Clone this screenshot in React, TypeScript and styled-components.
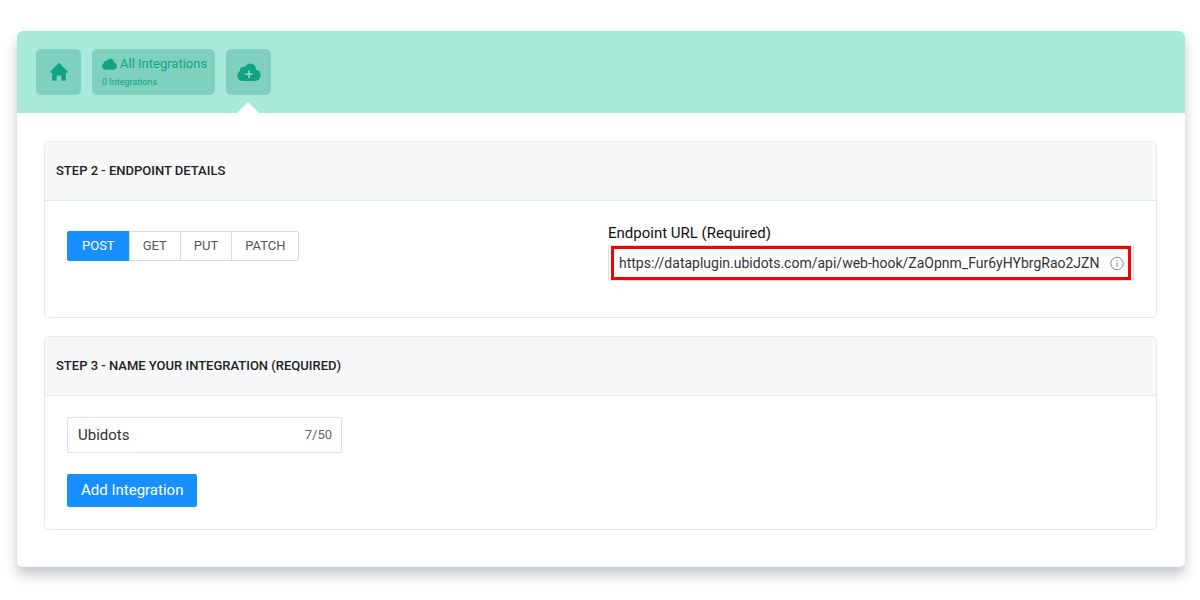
import React, { useState } from "react";
import styled, { createGlobalStyle } from "styled-components";

const GlobalStyle = createGlobalStyle`
  *, *::before, *::after { box-sizing: border-box; }
  body {
    margin: 0;
    background: #fff;
    color: #222;
    font-family: Roboto, "Liberation Sans", sans-serif;
    font-size: 15px;
    line-height: 20px;
  }
  button, input { font: inherit; color: inherit; }
`;

const Card = styled.main`
  margin: 31px 15px 33px 17px;
  border-radius: 6px;
  background: #fff;
  box-shadow: 0 8px 12px rgba(30, 40, 50, 0.25);
`;

const Toolbar = styled.nav`
  display: flex;
  gap: 11px;
  padding: 18px 19px;
  border-radius: 6px 6px 0 0;
  background: #a9e9d9;
`;

const Tile = styled.button<{ $active?: boolean }>`
  position: relative;
  display: flex;
  align-items: center;
  justify-content: center;
  width: 45px;
  height: 46px;
  padding: 0;
  border: 0;
  border-radius: 5px;
  background: #7fd1bd;
  color: #0fa47f;
  cursor: pointer;

  &::after {
    content: "";
    display: ${(p) => (p.$active ? "block" : "none")};
    position: absolute;
    top: 53px;
    left: 11px;
    border: solid transparent;
    border-width: 0 11px 11px;
    border-bottom-color: #fff;
  }
`;

const WideTile = styled(Tile)`
  flex-direction: column;
  align-items: flex-start;
  width: 123px;
  padding: 0 10px;
`;

const TileTitle = styled.span`
  display: flex;
  align-items: center;
  gap: 3px;
  font-size: 13px;
  line-height: 20px;
  white-space: nowrap;
`;

const TileNote = styled.span`
  font-size: 9px;
  line-height: 16px;
`;

const Content = styled.div`
  display: flex;
  flex-direction: column;
  gap: 18px;
  padding: 28px 28px 37px 27px;
`;

const Panel = styled.section`
  border: 1px solid #e6e8ec;
  border-radius: 5px;
`;

const PanelTitle = styled.h2`
  margin: 0;
  padding: 19px 11px;
  border-bottom: 1px solid #e6e8ec;
  border-radius: 4px 4px 0 0;
  background: #f7f8fa;
  font-size: 13px;
  font-weight: 500;
  line-height: 20px;
`;

const EndpointBody = styled.div`
  display: grid;
  grid-template-columns: 1fr 1fr;
  align-items: start;
  gap: 15px;
  padding: 22px 22px 36px;
`;

const Methods = styled.div`
  display: flex;
  padding-top: 8px;
`;

const Method = styled.button<{ $selected: boolean }>`
  height: 30px;
  margin-right: -1px;
  padding: 0 13px 1px;
  border: 1px solid ${(p) => (p.$selected ? "#178fff" : "#dcdcdc")};
  background: ${(p) => (p.$selected ? "#178fff" : "#fff")};
  color: ${(p) => (p.$selected ? "#fff" : "#555")};
  font-size: 13px;
  line-height: 20px;
  cursor: pointer;

  &:first-child { border-radius: 2px 0 0 2px; padding: 0 14px 1px; }
  &:last-child { border-radius: 0 2px 2px 0; }
`;

const Label = styled.label`
  display: block;
  padding-bottom: 2px;
  color: #111;
`;

const Field = styled.div`
  position: relative;
  display: flex;
  align-items: center;
  height: 36px;
  padding: 0 9px 0 10px;
  border: 1px solid #e0e0e0;
  border-radius: 2px;
  background: #fff;
`;

const NameField = styled(Field)`
  width: 275px;
`;

const TextInput = styled.input`
  flex: 1;
  min-width: 0;
  padding: 0;
  border: 0;
  outline: 0;
  background: transparent;
  color: #333;
`;

const UrlInput = styled(TextInput)`
  font-size: 14px;
`;

const Highlight = styled.span`
  position: absolute;
  inset: 0 2px;
  border: 3px solid #f60000;
  pointer-events: none;
`;

const InfoIcon = styled.svg`
  margin-left: 2px;
  flex: none;
`;

const Counter = styled.span`
  color: #666;
  font-size: 13px;
`;

const NameBody = styled.form`
  display: flex;
  flex-direction: column;
  align-items: flex-start;
  gap: 21px;
  padding: 21px 22px 22px;
`;

const Submit = styled.button`
  height: 33px;
  padding: 0 14px 2px;
  border: 0;
  border-radius: 2px;
  background: #178fff;
  color: #fff;
  cursor: pointer;
`;

const CloudShape = () => (
  <>
    <circle cx="13.3" cy="6.2" r="5.7" />
    <circle cx="6.9" cy="7.8" r="4" />
    <circle cx="5.9" cy="12.5" r="5.5" />
    <circle cx="18" cy="12.3" r="5.7" />
    <path d="M5.9 8H18v10H5.9Z" />
  </>
);

const METHODS = ["POST", "GET", "PUT", "PATCH"];

export default function App() {
  const [method, setMethod] = useState("POST");
  const [url, setUrl] = useState(
    "https://dataplugin.ubidots.com/api/web-hook/ZaOpnm_Fur6yHYbrgRao2JZN"
  );
  const [name, setName] = useState("Ubidots");

  return (
    <>
      <GlobalStyle />
      <Card>
        <Toolbar>
          <Tile type="button" aria-label="Home">
            <svg width="18" height="18" viewBox="0 0 18 18" fill="currentColor">
              <path d="M8.4.3a.9.9 0 0 1 1.2 0L17.8 8.8c.4.4.2.9-.4.9H15.8v7a1.1 1.1 0 0 1-1.1 1.1h-2.6a.8.8 0 0 1-.8-.8v-3.5a1 1 0 0 0-1-1H7.7a1 1 0 0 0-1 1v3.5a.8.8 0 0 1-.8.8H3.3A1.1 1.1 0 0 1 2.2 16.7v-7H.6C0 9.7-.2 9.2.2 8.8Z" />
            </svg>
          </Tile>
          <WideTile type="button">
            <TileTitle>
              <svg width="15" height="12" viewBox="0 0 24 18" fill="currentColor">
                <CloudShape />
              </svg>
              All Integrations
            </TileTitle>
            <TileNote>0 Integrations</TileNote>
          </WideTile>
          <Tile type="button" aria-label="Add integration" $active>
            <svg width="24" height="18" viewBox="0 0 24 18" fill="currentColor">
              <CloudShape />
              <path d="M12 7.5v7.5M8.2 11.2h7.6" stroke="#a9e9d9" strokeWidth="1.3" />
            </svg>
          </Tile>
        </Toolbar>
        <Content>
          <Panel>
            <PanelTitle>STEP 2 - ENDPOINT DETAILS</PanelTitle>
            <EndpointBody>
              <Methods role="group" aria-label="Method">
                {METHODS.map((m) => (
                  <Method
                    key={m}
                    type="button"
                    aria-pressed={m === method}
                    $selected={m === method}
                    onClick={() => setMethod(m)}
                  >
                    {m}
                  </Method>
                ))}
              </Methods>
              <div>
                <Label htmlFor="endpoint">Endpoint URL (Required)</Label>
                <Field>
                  <UrlInput
                    id="endpoint"
                    value={url}
                    onChange={(e) => setUrl(e.target.value)}
                  />
                  <InfoIcon width="15" height="15" viewBox="0 0 15 15" fill="none" stroke="#888">
                    <circle cx="8" cy="7.5" r="6.2" />
                    <path d="M8 6.5v4.5M8 4v1.3" />
                  </InfoIcon>
                  <Highlight />
                </Field>
              </div>
            </EndpointBody>
          </Panel>
          <Panel>
            <PanelTitle id="name-title">STEP 3 - NAME YOUR INTEGRATION (REQUIRED)</PanelTitle>
            <NameBody onSubmit={(e) => e.preventDefault()}>
              <NameField>
                <TextInput
                  aria-labelledby="name-title"
                  maxLength={50}
                  value={name}
                  onChange={(e) => setName(e.target.value)}
                />
                <Counter>{name.length}/50</Counter>
              </NameField>
              <Submit type="submit">Add Integration</Submit>
            </NameBody>
          </Panel>
        </Content>
      </Card>
    </>
  );
}
